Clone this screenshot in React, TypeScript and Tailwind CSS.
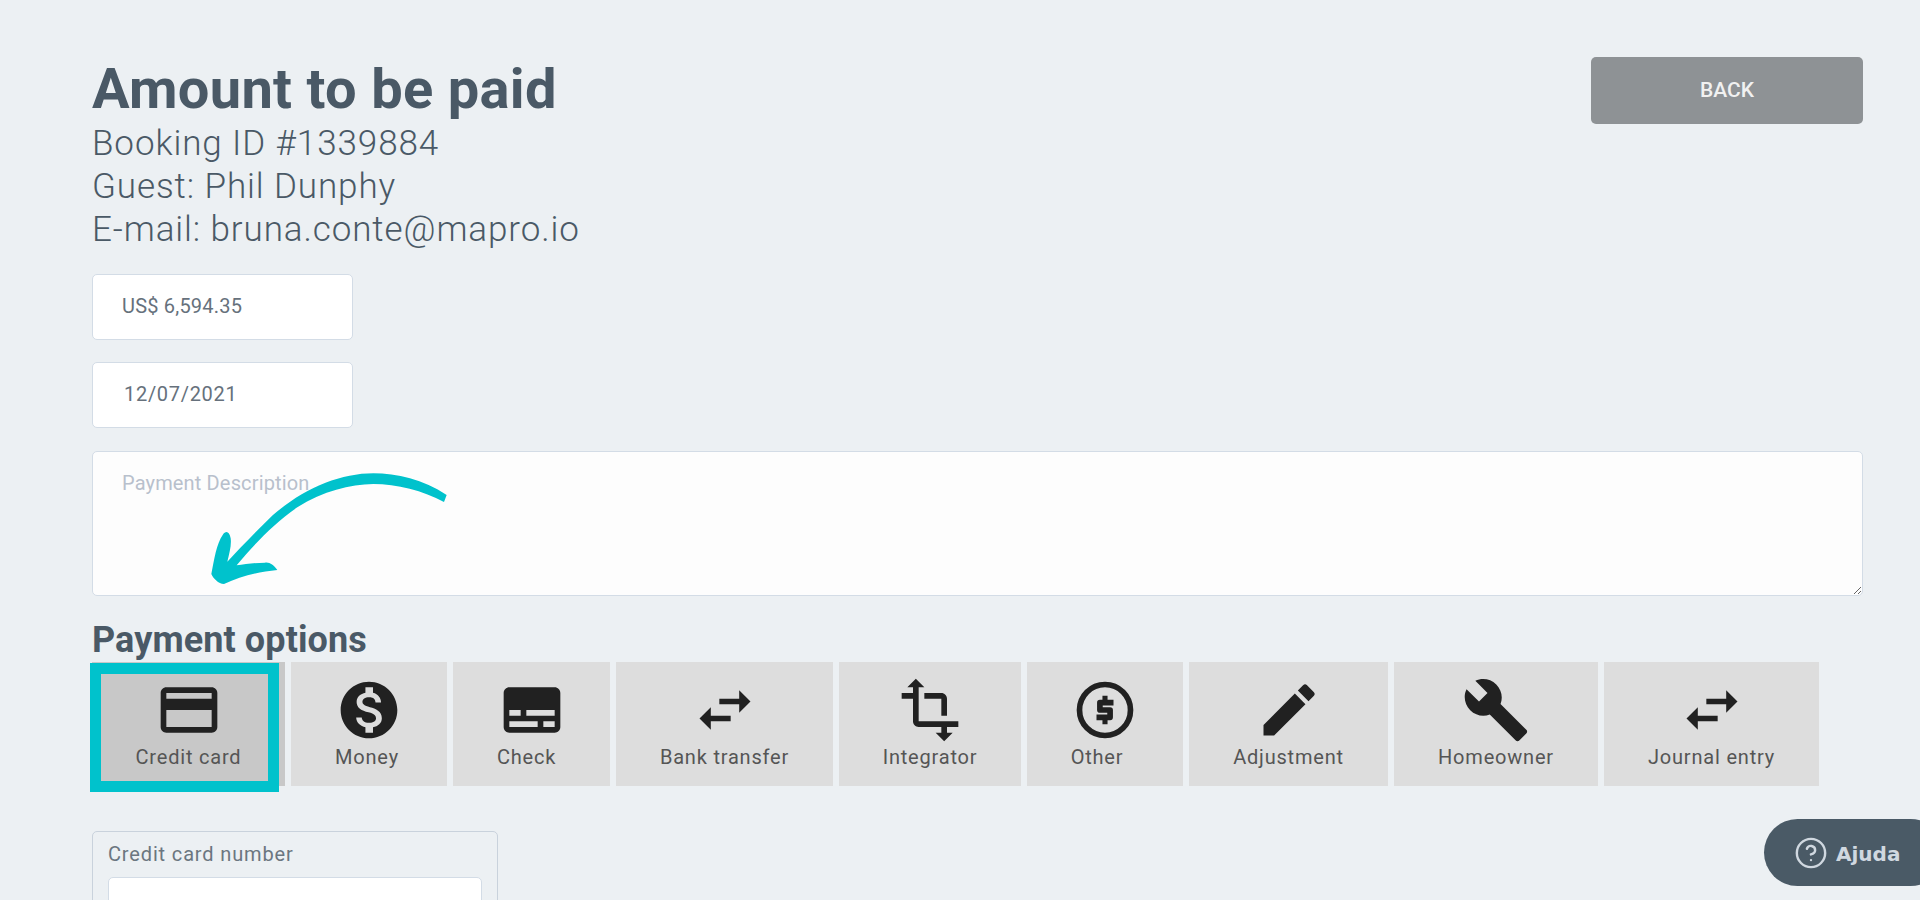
import { MdCreditCard, MdMonetizationOn, MdSubtitles, MdSwapHoriz, MdTransform, MdEdit, MdBuild } from "react-icons/md";
import { FiHelpCircle } from "react-icons/fi";

function OtherIcon({ className }: { className?: string }) {
  return (
    <svg viewBox="0 0 24 24" className={className} fill="none" stroke="currentColor">
      <circle cx="12" cy="12" r="9" strokeWidth="2" />
      <path d="M15 9.4H10.2V12H13.8V14.6H9" strokeWidth="2" strokeLinejoin="round" />
      <path d="M12 7V9M12 15V17" strokeWidth="1.8" />
    </svg>
  );
}

const options = [
  { label: "Credit card", Icon: MdCreditCard, w: "w-[193px]", bg: "bg-[#c8c8c8]", shift: "" },
  { label: "Money", Icon: MdMonetizationOn, w: "w-[156px]", bg: "bg-[#dddddd]", shift: "pr-[4px]" },
  { label: "Check", Icon: MdSubtitles, w: "w-[157px]", bg: "bg-[#dddddd]", shift: "pr-[10px]" },
  { label: "Bank transfer", Icon: MdSwapHoriz, w: "w-[217px]", bg: "bg-[#dddddd]", shift: "" },
  { label: "Integrator", Icon: MdTransform, w: "w-[182px]", bg: "bg-[#dddddd]", shift: "" },
  { label: "Other", Icon: OtherIcon, w: "w-[156px]", bg: "bg-[#dddddd]", shift: "pr-[16px]" },
  { label: "Adjustment", Icon: MdEdit, w: "w-[199px]", bg: "bg-[#dddddd]", shift: "" },
  { label: "Homeowner", Icon: MdBuild, w: "w-[204px]", bg: "bg-[#dddddd]", shift: "" },
  { label: "Journal entry", Icon: MdSwapHoriz, w: "w-[215px]", bg: "bg-[#dddddd]", shift: "" },
];

export default function App() {
  return (
    <div className="relative h-[900px] overflow-hidden bg-[#ecf0f3] px-[92px] pt-[57px] font-['Roboto',sans-serif] text-[#4a5966]">
      <div className="flex w-[1771px] items-start justify-between">
        <h1 className="text-[56px] font-bold leading-[64px] tracking-[0.3px]">Amount to be paid</h1>
        <button className="h-[67px] w-[272px] rounded-[5px] bg-[#8e9295] text-[21px] font-medium text-[#f1f1f1]">BACK</button>
      </div>
      <div className="-mt-[2px] text-[35px] font-light leading-[43px] tracking-[0.9px]">
        <div>Booking ID #1339884</div>
        <div>Guest: Phil Dunphy</div>
        <div>E-mail: bruna.conte@mapro.io</div>
      </div>
      <div className="mt-[23px] flex h-[66px] w-[261px] items-center rounded-[5px] border border-[#d3dce6] bg-white pb-[2px] pl-[29px] text-[20px] tracking-[0.2px] text-[#66717c]">US$ 6,594.35</div>
      <div className="mt-[22px] flex h-[66px] w-[261px] items-center rounded-[5px] border border-[#d3dce6] bg-white pb-[2px] pl-[31px] text-[20px] tracking-[0.7px] text-[#66717c]">12/07/2021</div>
      <textarea
        readOnly
        placeholder="Payment Description"
        className="mt-[23px] block h-[145px] w-[1771px] rounded-[5px] border border-[#d3dce6] bg-[#fdfdfd] pl-[29px] pt-[16px] text-[20px] tracking-[0.15px] outline-none placeholder:text-[#b8c0cc]"
      />
      <h2 className="mt-[26px] text-[36px] font-bold leading-[36px] tracking-[0.1px]">Payment options</h2>
      <div className="relative mt-[4px] flex gap-[6px]">
        {options.map(({ label, Icon, w, bg, shift }) => (
          <div key={label} className={`flex h-[124px] flex-col items-center pt-[14px] ${w} ${bg}`}>
            <Icon className="h-[68px] w-[68px] text-[#212121]" />
            <span className={`mt-[1px] text-[20px] leading-[24px] tracking-[0.8px] text-[#555555] ${shift}`}>{label}</span>
          </div>
        ))}
        <div className="absolute left-[-2px] top-[1px] h-[129px] w-[189px] border-[11px] border-[#00c2cc]" />
      </div>
      <div className="mt-[45px] h-[120px] w-[406px] rounded-[5px] border border-[#c9d2dc] px-[15px] pt-[9px]">
        <div className="text-[20px] leading-[26px] tracking-[0.85px] text-[#6b7680]">Credit card number</div>
        <div className="mt-[10px] h-[60px] w-[374px] rounded-[5px] border border-[#d3dce6] bg-white" />
      </div>

      <svg className="absolute left-[190px] top-[460px]" width="280" height="140" viewBox="0 0 840 420" fill="#00c2cc">
        <path d="M770 105 C700 58 620 40 550 40 C450 40 340 86 248 166 C200 212 150 265 112 305 C118 280 125 255 122 235 C118 215 108 210 98 225 C80 250 72 300 64 342 C70 355 85 372 102 372 C150 350 205 335 262 330 C250 315 240 306 225 308 C195 308 165 312 140 316 C190 255 255 188 322 142 C400 92 480 74 550 72 C620 72 700 92 762 126 Z" />
      </svg>

      <div className="absolute left-[1764px] top-[819px] flex h-[67px] w-[180px] items-center rounded-[34px] bg-[#4a5a66] pl-[30px] font-['DejaVu_Sans',sans-serif] text-[#d0d8e0]">
        <FiHelpCircle className="h-[34px] w-[34px] stroke-[1.7]" />
        <span className="ml-[8px] pt-[2px] text-[20px] font-bold">Ajuda</span>
      </div>
    </div>
  );
}
